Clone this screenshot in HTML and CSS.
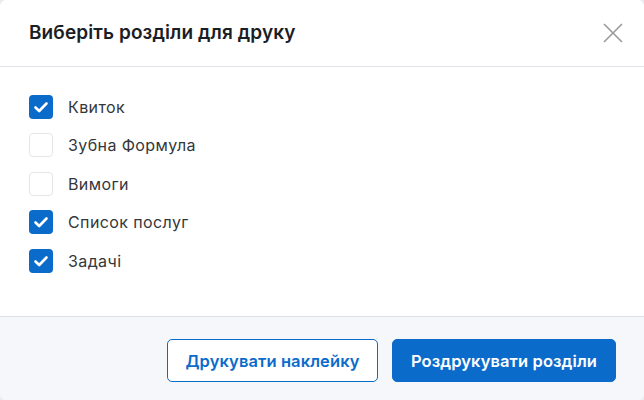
FILE: index.html
```html
<!DOCTYPE html>
<html lang="uk">
<head>
<meta charset="utf-8">
<link rel="stylesheet" href="styles.css">
</head>
<body>
<div class="modal">
  <div class="header">
    <h1 class="title">Виберіть розділи для друку</h1>
    <button class="close" aria-label="Закрити">
      <svg width="20" height="20" viewBox="0 0 20 20"><path d="M1 1 L19 19 M19 1 L1 19" stroke="#9a9a9a" stroke-width="1.6" fill="none"/></svg>
    </button>
  </div>
  <div class="content">
    <label class="row"><span class="box checked"><svg width="24" height="24" viewBox="0 0 24 24"><path d="M6.5 12.5 L10.2 16 L17.5 8.5" stroke="#fff" stroke-width="2.6" fill="none" stroke-linecap="round" stroke-linejoin="round"/></svg></span><span class="label">Квиток</span></label>
    <label class="row"><span class="box"></span><span class="label">Зубна Формула</span></label>
    <label class="row"><span class="box"></span><span class="label">Вимоги</span></label>
    <label class="row"><span class="box checked"><svg width="24" height="24" viewBox="0 0 24 24"><path d="M6.5 12.5 L10.2 16 L17.5 8.5" stroke="#fff" stroke-width="2.6" fill="none" stroke-linecap="round" stroke-linejoin="round"/></svg></span><span class="label">Список послуг</span></label>
    <label class="row"><span class="box checked"><svg width="24" height="24" viewBox="0 0 24 24"><path d="M6.5 12.5 L10.2 16 L17.5 8.5" stroke="#fff" stroke-width="2.6" fill="none" stroke-linecap="round" stroke-linejoin="round"/></svg></span><span class="label">Задачі</span></label>
  </div>
  <div class="footer">
    <button class="btn btn-outline">Друкувати наклейку</button>
    <button class="btn btn-primary">Роздрукувати розділи</button>
  </div>
</div>
</body>
</html>
```
FILE: styles.css
```css
* { box-sizing: border-box; }
html, body { margin: 0; padding: 0; background: #e9ebee; }
body { font-family: Inter, "Noto Sans", sans-serif; }
.modal {
  width: 644px;
  height: 400px;
  background: #fff;
  border-radius: 6px;
  overflow: hidden;
  display: flex;
  flex-direction: column;
}
.header {
  height: 67px;
  border-bottom: 1px solid #dfe2e6;
  display: flex;
  align-items: center;
  justify-content: space-between;
  padding: 0 21px 0 29px;
}
.title {
  margin: 0;
  font-size: 19px;
  font-weight: 600;
  color: #1b1e24;
  letter-spacing: 0.1px;
  padding-bottom: 1px;
}
.close {
  border: 0;
  background: none;
  padding: 0;
  width: 20px;
  height: 20px;
  display: flex;
}
.content {
  flex: 1;
  padding: 28px 29px 0;
  display: flex;
  flex-direction: column;
  gap: 14.4px;
}
.row {
  display: flex;
  align-items: center;
  gap: 15px;
  height: 24px;
}
.box {
  width: 24px;
  height: 24px;
  border-radius: 4px;
  border: 1px solid #e4e6e9;
  background: #fff;
  display: flex;
  flex: none;
}
.box.checked {
  background: #0b6bcb;
  border: 0;
}
.label {
  font-size: 16px;
  color: #34373b;
  letter-spacing: 0.4px;
}
.footer {
  height: 84px;
  background: #f5f7fa;
  border-top: 1px solid #dde1e6;
  display: flex;
  justify-content: flex-end;
  align-items: flex-start;
  gap: 14px;
  padding: 22px 28px 0;
}
.btn {
  height: 43px;
  border-radius: 5px;
  font-family: Inter, "Noto Sans", sans-serif;
  font-size: 16.5px;
  font-weight: 600;
  letter-spacing: 0.1px;
  padding: 0;
}
.btn-outline {
  width: 211px;
  background: #fff;
  border: 1px solid #0b6bcb;
  color: #0b6bcb;
}
.btn-primary {
  width: 224px;
  background: #0b6bcb;
  border: 1px solid #0b6bcb;
  color: #fff;
}
```
